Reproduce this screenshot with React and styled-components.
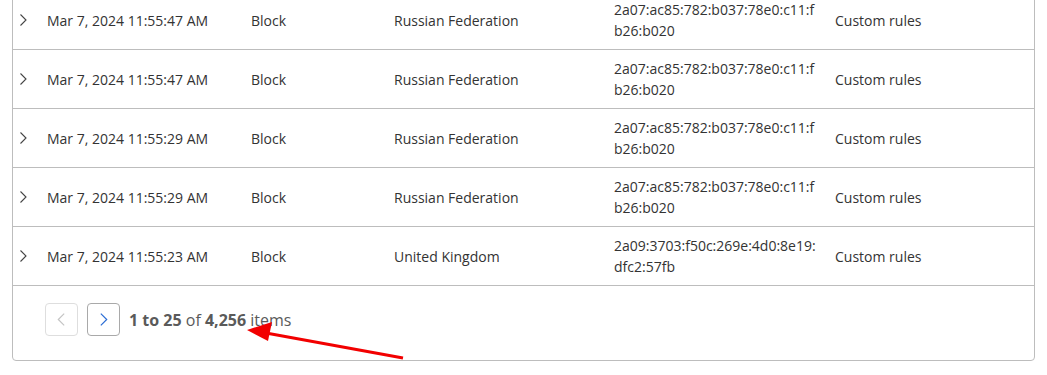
import styled, { createGlobalStyle } from "styled-components";

const GlobalStyle = createGlobalStyle`
    body {
        margin: 0;
        background: #fff;
        font-family: "Open Sans", "Noto Sans", sans-serif;
        overflow: hidden;
    }
`

const StyledPage = styled.div`
    position: relative;
    width: 1047px;
    height: 375px;
    overflow: hidden;
`

const StyledPanel = styled.section`
    margin: -10px 0 0 12px;
    width: 1021px;
    border: 1px solid #bdbdbd;
    border-radius: 0 0 4px 4px;
    background: #fff;
`

const StyledRow = styled.div`
    display: grid;
    grid-template-columns: 34px 204px 143px 220px 221px 1fr;
    align-items: center;
    height: 58px;
    border-bottom: 1px solid #bdbdbd;
    font-size: 14px;
    line-height: 21px;
    color: #333;
`

const StyledToggle = styled.span`
    display: flex;
    justify-content: flex-start;
    padding-left: 3px;
    color: #444;
`

const StyledCell = styled.span`
    padding-right: 16px;
    word-break: ${(p) => (p.$wrap ? "break-all" : "normal")};
`

const StyledFooter = styled.div`
    display: flex;
    align-items: center;
    gap: 9px;
    height: 74px;
    padding: 0 0 7px 32px;
    box-sizing: border-box;
`

const StyledPageButton = styled.button`
    display: flex;
    align-items: center;
    justify-content: center;
    width: 33px;
    height: 33px;
    padding: 0;
    background: #fff;
    border: 1px solid ${(p) => (p.disabled ? "#dedede" : "#a9a9a9")};
    border-radius: 4px;
    color: ${(p) => (p.disabled ? "#c4c4c4" : "#2a6cd4")};
`

const StyledCount = styled.span`
    font-size: 16px;
    color: #5a5a5a;

    b {
        font-weight: 700;
    }
`

const StyledArrow = styled.svg`
    position: absolute;
    left: 0;
    top: 0;
    pointer-events: none;
`

const Chevron = ({ dir = "right", size = 14 }) => (
    <svg width={size} height={size} viewBox="0 0 14 14" fill="none">
        <path
            d={dir === "right" ? "M4.5 1.5 L10 7 L4.5 12.5" : "M9.5 1.5 L4 7 L9.5 12.5"}
            stroke="currentColor"
            strokeWidth="1.1"
        />
    </svg>
)

const rows = [
    ["Mar 7, 2024 11:55:47 AM", "Russian Federation", "2a07:ac85:782:b037:78e0:c11:fb26:b020"],
    ["Mar 7, 2024 11:55:47 AM", "Russian Federation", "2a07:ac85:782:b037:78e0:c11:fb26:b020"],
    ["Mar 7, 2024 11:55:29 AM", "Russian Federation", "2a07:ac85:782:b037:78e0:c11:fb26:b020"],
    ["Mar 7, 2024 11:55:29 AM", "Russian Federation", "2a07:ac85:782:b037:78e0:c11:fb26:b020"],
    ["Mar 7, 2024 11:55:23 AM", "United Kingdom", "2a09:3703:f50c:269e:4d0:8e19:dfc2:57fb"],
]

const App = () => {
    return (
        <StyledPage>
            <GlobalStyle />
            <StyledPanel>
                {rows.map(([time, country, ip], i) => (
                    <StyledRow key={i}>
                        <StyledToggle>
                            <Chevron />
                        </StyledToggle>
                        <StyledCell>{time}</StyledCell>
                        <StyledCell>Block</StyledCell>
                        <StyledCell>{country}</StyledCell>
                        <StyledCell $wrap>{ip}</StyledCell>
                        <StyledCell>Custom rules</StyledCell>
                    </StyledRow>
                ))}
                <StyledFooter>
                    <StyledPageButton disabled>
                        <Chevron dir="left" size={15} />
                    </StyledPageButton>
                    <StyledPageButton>
                        <Chevron size={15} />
                    </StyledPageButton>
                    <StyledCount>
                        <b>1 to 25</b> of <b>4,256</b> items
                    </StyledCount>
                </StyledFooter>
            </StyledPanel>
            <StyledArrow width="1047" height="375">
                <line x1="403" y1="358" x2="266" y2="333" stroke="#f20000" strokeWidth="3" />
                <polygon points="247,330 272,322 268,341" fill="#f20000" />
            </StyledArrow>
        </StyledPage>
    )
}

export default App;
